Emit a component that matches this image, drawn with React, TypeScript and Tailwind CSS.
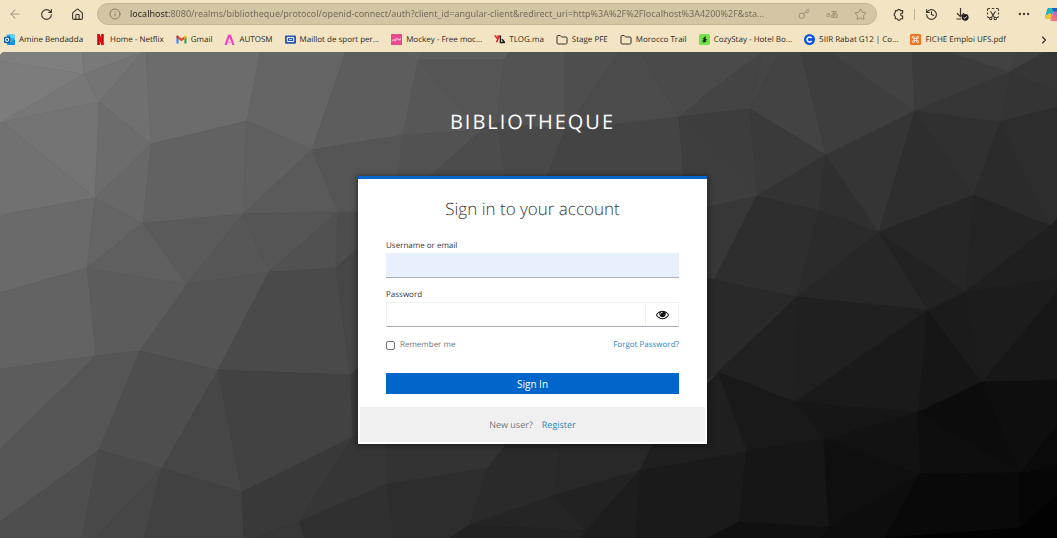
import { useState, type ReactNode } from "react";
import {
  ArrowLeft,
  ChevronRight,
  Ellipsis,
  Folder,
  History,
  House,
  Info,
  Key,
  RotateCw,
  Star,
} from "lucide-react";

const facets: [string, string][] = [
  ["#7f7f7f", "0,52 82,52 84,74 0,61"],
  ["#797979", "82,52 143,52 84,74"],
  ["#7c7c7c", "0,61 84,74 2,122 0,124"],
  ["#777777", "84,74 99,102 2,122"],
  ["#747474", "84,74 143,52 99,102"],
  ["#707070", "143,52 146,52 151,144 99,102"],
  ["#6c6c6c", "146,52 260,52 247,121 151,144"],
  ["#646464", "260,52 346,52 312,150 247,121"],
  ["#5d5d5d", "346,52 404,52 418,60 403,135 312,150"],
  ["#5f5f5f", "404,52 424,52 418,60"],
  ["#737373", "2,122 99,102 95,198"],
  ["#717171", "0,122 2,122 95,198 6,214 0,218"],
  ["#6c6c6c", "99,102 151,144 95,198"],
  ["#686868", "95,198 151,144 143,223"],
  ["#626262", "151,144 247,121 243,214 143,223"],
  ["#606060", "247,121 312,150 243,214"],
  ["#5a5a5a", "312,150 338,212 243,214"],
  ["#555555", "312,150 403,135 397,212 338,212"],
  ["#6a6a6a", "6,214 95,198 87,268 0,293 0,218"],
  ["#646464", "95,198 143,223 87,268"],
  ["#5f5f5f", "143,223 187,284 87,268"],
  ["#5a5a5a", "143,223 243,214 187,284"],
  ["#575757", "243,214 269,272 187,284"],
  ["#555555", "243,214 338,212 269,272"],
  ["#515151", "338,212 336,268 269,272"],
  ["#4d4d4d", "338,212 400,212 400,210 336,268"],
  ["#636363", "0,293 87,268 96,356 0,369"],
  ["#5c5c5c", "87,268 187,284 140,351 96,356"],
  ["#545454", "187,284 269,272 218,370 140,351"],
  ["#4a4a4a", "269,272 336,268 350,375 218,370"],
  ["#464646", "336,268 400,210 400,330 350,375"],
  ["#5c5c5c", "0,369 96,356 0,449"],
  ["#555555", "96,356 140,351 99,450 0,522 0,449"],
  ["#4e4e4e", "140,351 218,370 162,468 99,450"],
  ["#464646", "218,370 242,492 162,468"],
  ["#424242", "218,370 350,375 353,437 242,492"],
  ["#3a3a3a", "350,375 400,330 400,437 353,437"],
  ["#4e4e4e", "0,522 99,450 82,538 0,538"],
  ["#494949", "99,450 162,468 95,538 82,538"],
  ["#464646", "162,468 144,538 95,538"],
  ["#414141", "162,468 242,492 244,538 144,538"],
  ["#393939", "242,492 353,437 299,522 255,538 244,538"],
  ["#363636", "353,437 387,437 387,484 299,522"],
  ["#303030", "299,522 387,484 394,538 304,538"],
  ["#373737", "255,538 299,522 304,538"],
  ["#333333", "387,430 500,430 506,444 488,468 387,484"],
  ["#2d2d2d", "387,484 488,468 470,525 450,538 394,538"],
  ["#2a2a2a", "488,468 506,444 561,444 553,496 470,525"],
  ["#282828", "561,440 655,440 640,470 553,496"],
  ["#252525", "470,525 553,496 586,531"],
  ["#222222", "470,525 586,531 580,538 450,538"],
  ["#222222", "553,496 640,470 586,531"],
  ["#1d1d1d", "640,470 586,531 580,538 636,538"],
  ["#1a1a1a", "640,470 747,451 739,522 707,538 636,538"],
  ["#1f1f1f", "655,440 718,372 747,451 640,470"],
  ["#5c5c5c", "424,52 510,52 504,60 418,60"],
  ["#555555", "418,60 504,60 497,123 478,130"],
  ["#575757", "418,60 478,130 403,135"],
  ["#525252", "403,135 482,130 428,178 397,178"],
  ["#4c4c4c", "482,130 497,123 506,178 428,178"],
  ["#535353", "510,52 565,52 565,130 497,123 504,60"],
  ["#4e4e4e", "565,52 620,52 565,130"],
  ["#494949", "497,123 565,130 546,178 506,178"],
  ["#4b4b4b", "620,52 640,52 679,117 565,130"],
  ["#444444", "565,130 679,117 684,178 546,178"],
  ["#4a4a4a", "640,52 763,52 679,117"],
  ["#444444", "679,117 710,91 763,52 750,109"],
  ["#3d3d3d", "679,117 750,109 757,196 684,180"],
  ["#454545", "763,52 780,52 750,109"],
  ["#434343", "780,52 801,52 826,155 750,109"],
  ["#3e3e3e", "801,52 830,52 915,111 826,155"],
  ["#424242", "830,52 912,52 915,111"],
  ["#3b3b3b", "912,52 950,52 1010,72 915,111"],
  ["#414141", "950,52 1020,52 1010,72"],
  ["#404040", "1020,52 1045,52 1010,72"],
  ["#363636", "1045,52 1057,52 1057,92 1010,72"],
  ["#343434", "1010,72 1057,92 1057,107 1000,122"],
  ["#363636", "915,111 1010,72 1000,122"],
  ["#3a3a3a", "750,109 826,155 757,196"],
  ["#3e3e3e", "680,118 757,196 700,209 684,180"],
  ["#333333", "826,155 819,211 757,196"],
  ["#2f2f2f", "826,155 879,232 819,211"],
  ["#353535", "826,155 915,111 879,232"],
  ["#2e2e2e", "915,111 974,195 879,232"],
  ["#303030", "915,111 1000,122 974,195"],
  ["#2b2b2b", "1000,122 1050,226 974,195"],
  ["#2d2d2d", "1000,122 1057,107 1057,219 1050,226"],
  ["#373737", "700,209 757,196 714,280 700,285"],
  ["#2e2e2e", "757,196 819,211 797,297 714,280"],
  ["#2b2b2b", "819,211 879,232 797,297"],
  ["#272727", "879,232 928,310 797,297"],
  ["#222222", "879,232 966,292 928,310"],
  ["#262626", "879,232 974,195 966,292"],
  ["#242424", "974,195 1050,226 966,292"],
  ["#1f1f1f", "1050,226 1057,219 1057,279 966,292"],
  ["#292929", "700,275 714,280 797,297 718,372 700,385"],
  ["#212121", "797,297 795,402 718,372"],
  ["#202020", "797,297 928,310 795,402"],
  ["#1a1a1a", "928,310 918,412 795,402"],
  ["#161616", "928,310 982,382 918,412"],
  ["#1b1b1b", "928,310 966,292 982,382"],
  ["#1c1c1c", "966,292 1057,279 1057,292 982,382"],
  ["#171717", "1057,292 1057,380 982,382"],
  ["#191919", "718,372 795,402 747,451"],
  ["#191919", "795,402 824,439 747,451"],
  ["#161616", "795,402 918,412 824,439"],
  ["#121212", "824,439 918,412 920,474"],
  ["#0e0e0e", "918,412 1020,473 920,474"],
  ["#0c0c0c", "918,412 982,382 1020,473"],
  ["#0e0e0e", "982,382 1057,380 1057,425 1020,473"],
  ["#0a0a0a", "1057,425 1057,467 1020,473"],
  ["#161616", "747,451 824,439 829,527 739,522"],
  ["#101010", "739,522 829,527 820,538 707,538"],
  ["#0f0f0f", "824,439 920,474 829,527"],
  ["#0d0d0d", "829,527 920,474 885,538 820,538"],
  ["#090909", "920,474 1020,473 1020,528 885,538"],
  ["#060606", "1020,473 1057,467 1057,495 1020,528"],
  ["#020202", "1020,528 1057,495 1057,538 885,538"],
];

function Backdrop() {
  return (
    <svg
      aria-hidden="true"
      viewBox="0 52 1057 486"
      preserveAspectRatio="xMidYMid slice"
      className="absolute inset-0 h-full w-full"
    >
      {facets.map(([fill, points]) => (
        <polygon key={points} points={points} fill={fill} stroke={fill} strokeWidth="0.6" />
      ))}
    </svg>
  );
}

const icon = "size-[11px] shrink-0";

function OutlookIcon() {
  return (
    <svg viewBox="0 0 12 12" className={icon}>
      <rect x="3" y="0.5" width="8.5" height="7" rx="0.8" fill="#28a8ea" />
      <rect x="7" y="0.5" width="4.5" height="4" fill="#50d9ff" />
      <path d="M3 6l4.5 2.5L12 6v5a1 1 0 0 1-1 1H4a1 1 0 0 1-1-1z" fill="#1490df" />
      <rect x="0" y="3" width="6.8" height="6.8" rx="0.8" fill="#0f5fb4" />
      <circle cx="3.4" cy="6.4" r="1.7" fill="none" stroke="#fff" strokeWidth="1.1" />
    </svg>
  );
}

function NetflixIcon() {
  return (
    <svg viewBox="0 0 12 12" className={icon}>
      <path d="M2.5 0h2.7v12l-2.7.2zM6.8 0h2.7v12.2L6.8 12z" fill="#b1060f" />
      <path d="M2.5 0h2.7l4.3 12.2L6.8 12z" fill="#e50914" />
    </svg>
  );
}

function GmailIcon() {
  return (
    <svg viewBox="0 0 12 12" className={icon}>
      <path d="M0.5 3v7.3h2.4V5z" fill="#4285f4" />
      <path d="M11.5 3v7.3H9.1V5z" fill="#34a853" />
      <path d="M9.1 2.6v3l2.4-1.8V2.7c0-1.2-1.3-1.5-2-.9z" fill="#fbbc04" />
      <path d="M2.9 5.6v-3L6 5l3.1-2.4v3L6 8z" fill="#ea4335" />
      <path d="M0.5 2.7v1.1l2.4 1.8v-3l-.4-.8c-.8-.6-2-.2-2 .9z" fill="#c5221f" />
    </svg>
  );
}

function AutosmIcon() {
  return (
    <svg viewBox="0 0 12 12" className={icon}>
      <path d="M0.5 12L4.4 1.2Q6 0 7.6 1.2L11.5 12H9L6 3.4 3 12z" fill="#f03fc0" />
      <path d="M4.3 8.2h3.4l.6 1.6H3.7z" fill="#f79be0" />
    </svg>
  );
}

function MaillotIcon() {
  return (
    <svg viewBox="0 0 12 12" className={icon}>
      <rect x="0" y="1.5" width="12" height="9" rx="1" fill="#2857b4" />
      <rect x="2.5" y="3.7" width="7" height="4.6" rx="1" fill="none" stroke="#fff" strokeWidth="1.1" />
      <path d="M4.5 6h3" stroke="#fff" strokeWidth="0.9" />
    </svg>
  );
}

function MockeyIcon() {
  return (
    <svg viewBox="0 0 12 12" className={icon}>
      <rect width="12" height="12" rx="0.6" fill="#e64b92" />
      <path d="M2 8V6.4h2.3v1.2h1V5.2h2.5v1.2H10V4.5" fill="none" stroke="#fbd3e6" strokeWidth="1" />
    </svg>
  );
}

function TlogIcon() {
  return (
    <svg viewBox="0 0 12 12" className={icon}>
      <path d="M0.8 1.5L3.6 5M5.8 2L2.8 9" stroke="#d92323" strokeWidth="1.7" fill="none" />
      <path d="M3 2.3h4" stroke="#d92323" strokeWidth="1.2" />
      <path d="M7 1.5v7.8h5M8.8 5.5l2.6 3.5" stroke="#1c1917" strokeWidth="1.5" fill="none" />
    </svg>
  );
}

function FolderIcon() {
  return <Folder className="size-[12px] shrink-0 text-[#35302a]" strokeWidth={2} />;
}

function CozyIcon() {
  return (
    <svg viewBox="0 0 12 12" className={icon}>
      <rect width="12" height="12" rx="2" fill="#74e34b" />
      <path d="M7.3 1.8L3.6 5.6h2L3 8.2h2.2L4.6 10l4.4-2.6H7l2-2H7.2z" fill="#14321a" />
    </svg>
  );
}

function CourseIcon() {
  return (
    <svg viewBox="0 0 12 12" className={icon}>
      <circle cx="6" cy="6" r="6" fill="#0c56dc" />
      <path d="M8.3 4.5a2.7 2.7 0 1 0 0 3" fill="none" stroke="#fff" strokeWidth="1.7" />
    </svg>
  );
}

function XamppIcon() {
  return (
    <svg viewBox="0 0 12 12" className={icon}>
      <rect width="12" height="12" rx="1.4" fill="#ee7420" />
      <path
        d="M4.7 4.7H3.6a1.1 1.1 0 1 1 1.1-1.1v4.8a1.1 1.1 0 1 1-1.1-1.1h4.8a1.1 1.1 0 1 1-1.1 1.1V3.6a1.1 1.1 0 1 1 1.1 1.1z"
        fill="none"
        stroke="#fff"
        strokeWidth="0.9"
      />
    </svg>
  );
}

const bookmarks: { label: string; icon: ReactNode }[] = [
  { label: "Amine Bendadda", icon: <OutlookIcon /> },
  { label: "Home - Netflix", icon: <NetflixIcon /> },
  { label: "Gmail", icon: <GmailIcon /> },
  { label: "AUTOSM", icon: <AutosmIcon /> },
  { label: "Maillot de sport per...", icon: <MaillotIcon /> },
  { label: "Mockey - Free moc...", icon: <MockeyIcon /> },
  { label: "TLOG.ma", icon: <TlogIcon /> },
  { label: "Stage PFE", icon: <FolderIcon /> },
  { label: "Morocco Trail", icon: <FolderIcon /> },
  { label: "CozyStay - Hotel Bo...", icon: <CozyIcon /> },
  { label: "5IIR Rabat G12 | Co...", icon: <CourseIcon /> },
  { label: "FICHE Emploi UFS.pdf", icon: <XamppIcon /> },
];

function ToolButton({ label, children }: { label: string; children: ReactNode }) {
  return (
    <button type="button" aria-label={label} className="flex size-4 shrink-0 items-center justify-center">
      {children}
    </button>
  );
}

function Toolbar() {
  return (
    <div className="flex h-7 items-center overflow-hidden pl-[7px] text-[#3b352b]">
      <div className="flex shrink-0 gap-[15px]">
        <ToolButton label="Back">
          <ArrowLeft className="size-[14px] text-[#a59c86]" strokeWidth={1.8} />
        </ToolButton>
        <ToolButton label="Refresh">
          <RotateCw className="size-[13px]" strokeWidth={2} />
        </ToolButton>
        <ToolButton label="Home">
          <House className="size-[13px]" strokeWidth={2} />
        </ToolButton>
      </div>
      <div className="ml-3 flex h-[22px] min-w-0 flex-1 items-center rounded-full border border-[#c3b797] bg-[#d3c6a4] pr-2 pl-[11px]">
        <Info className="size-[12px] shrink-0 text-[#7d755f]" strokeWidth={1.8} />
        <input
          type="text"
          aria-label="Address"
          defaultValue="localhost:8080/realms/bibliotheque/protocol/openid-connect/auth?client_id=angular-client&redirect_uri=http%3A%2F%2Flocalhost%3A4200%2F&sta..."
          className="ml-[9px] min-w-0 flex-1 bg-[linear-gradient(to_right,#2b2720_40px,#6f6855_40px)] bg-clip-text font-['Noto_Sans',sans-serif] text-[9px] leading-5 text-transparent outline-none"
        />
        <div className="ml-1 flex shrink-0 items-center gap-3 text-[#958b72]">
          <ToolButton label="Saved passwords">
            <Key className="size-[12px]" strokeWidth={1.8} />
          </ToolButton>
          <ToolButton label="Translate">
            <span className="text-[8px] leading-4 font-medium">aあ</span>
          </ToolButton>
          <ToolButton label="Add to favourites">
            <Star className="size-[13px]" strokeWidth={1.8} />
          </ToolButton>
        </div>
      </div>
      <div className="ml-[13px] flex shrink-0 items-center">
        <ToolButton label="Extensions">
          <svg viewBox="0 0 14 14" className="size-[13px]" fill="none" stroke="currentColor" strokeWidth="1.2" strokeLinejoin="round">
            <path d="M3.6 2.8h2.2a1.7 1.7 0 0 1 3.3 0h2.4v2.7a1.6 1.6 0 1 0 0 3v3.1H9.2a1.7 1.7 0 0 1-3.4 0H3.6V9a2 2 0 0 1 0-3.8z" />
          </svg>
        </ToolButton>
        <span className="mx-2 h-[11px] w-px bg-[#b9ae94]" />
        <div className="flex items-center gap-[15px]">
          <ToolButton label="History">
            <History className="size-[13px]" strokeWidth={2} />
          </ToolButton>
          <ToolButton label="Downloads">
            <svg viewBox="0 0 14 14" className="size-[14px]" fill="none">
              <path d="M5.5 1v8.3M2 6.2l3.5 3.4L9 6.2M1.5 12h5" stroke="currentColor" strokeWidth="1.2" />
              <circle cx="10.2" cy="10.3" r="3.4" fill="#1f1c18" />
              <path d="M8.7 10.3l1.1 1.2 2-2.2" stroke="#fff" strokeWidth="0.9" />
            </svg>
          </ToolButton>
          <ToolButton label="Screenshot">
            <svg viewBox="0 0 14 14" className="size-[14px]" fill="none" stroke="currentColor" strokeWidth="1.1">
              <path d="M1.5 4V2.8c0-.7.5-1.3 1.3-1.3H4M5.8 1.5h2.4M10 1.5h1.2c.8 0 1.3.6 1.3 1.3V4M1.5 5.6v2M12.5 5.6v2M1.5 9.2c0 .8.5 1.3 1.5 1.3M12.5 9.2c0 .8-.5 1.3-1.5 1.3" />
              <path d="M4.5 4.2l4 6.3M9.5 4.2l-4 6.3" />
              <circle cx="4.7" cy="11.5" r="1.2" />
              <circle cx="9.3" cy="11.5" r="1.2" />
            </svg>
          </ToolButton>
          <ToolButton label="More">
            <Ellipsis className="size-[14px]" strokeWidth={2} />
          </ToolButton>
        </div>
        <button type="button" aria-label="Copilot" className="ml-[13px] w-[12px] shrink-0 overflow-hidden">
          <svg viewBox="0 0 12 15" className="h-[15px] w-[12px]">
            <path d="M4 1h5L6 12H2.5C.5 12 0 10.5.6 8.5L2 3C2.4 1.6 3 1 4 1z" fill="#1a8fe6" />
            <path d="M2 4C2.4 2 3 1 4.5 1H9L7.5 6 1 8z" fill="#24b6b0" />
            <path d="M.6 8.5L5 6l2 2-1.5 4h-3C.6 12 .2 10.5.6 8.5z" fill="#f0c52e" />
            <path d="M7 1h5v4H8.5z" fill="#1560d4" />
            <path d="M8.5 4.5H12V14H5c1.2-.3 1.5-1.5 2-3z" fill="#d75bc8" />
            <path d="M6.5 11l1-3.5L12 10v4H5c.8-.4 1.2-1.5 1.5-3z" fill="#f4717e" />
          </svg>
        </button>
      </div>
    </div>
  );
}

function BookmarkBar() {
  return (
    <nav aria-label="Bookmarks" className="flex h-6 items-center justify-between pr-[7px] pb-px pl-1">
      <ul className="flex min-w-0 items-center gap-3 overflow-hidden">
        {bookmarks.map((b) => (
          <li key={b.label} className="shrink-0">
            <a href="#" className="flex items-center gap-1 text-[8px] leading-4 whitespace-nowrap text-[#2c2822]">
              {b.icon}
              {b.label}
            </a>
          </li>
        ))}
      </ul>
      <button type="button" aria-label="More bookmarks" className="shrink-0">
        <ChevronRight className="size-[12px] text-[#2c2822]" strokeWidth={2.2} />
      </button>
    </nav>
  );
}

function EyeIcon({ crossed }: { crossed: boolean }) {
  return (
    <svg viewBox="0 0 1792 1792" className="size-[13px]" fill="currentColor">
      <path d="M1664 960q-152-236-381-353 61 104 61 225 0 185-131.5 316.5t-316.5 131.5-316.5-131.5-131.5-316.5q0-121 61-225-229 117-381 353 133 205 333.5 326.5t434.5 121.5 434.5-121.5 333.5-326.5zm-720-384q0-20-14-34t-34-14q-125 0-214.5 89.5t-89.5 214.5q0 20 14 34t34 14 34-14 14-34q0-86 61-147t147-61q20 0 34-14t14-34zm848 384q0 34-20 69-140 230-376.5 368.5t-499.5 138.5-499.5-139-376.5-368q-20-35-20-69t20-69q140-229 376.5-368t499.5-139 499.5 139 376.5 368q20 35 20 69z" />
      {crossed && <path d="M350 1600L1350 250" stroke="currentColor" strokeWidth="130" />}
    </svg>
  );
}

function SignInCard() {
  const [visible, setVisible] = useState(false);
  return (
    <main className="w-full max-w-[349px] border-t-[3px] border-[#0066cc] bg-white shadow-[0_1px_6px_1px_rgba(0,0,0,0.45)]">
      <form className="px-7 pt-[18px] pb-[13px]" onSubmit={(e) => e.preventDefault()}>
        <h1 className="text-center text-[17px] leading-6 font-light text-[#363636]">Sign in to your account</h1>

        <label htmlFor="username" className="mt-[18px] block text-[8px] leading-[14px] text-[#363636]">
          Username or email
        </label>
        <input
          id="username"
          type="text"
          className="block h-[25px] w-full border-b border-[#a9adb3] bg-[#e8f0fe] px-2 text-[10px] outline-none"
        />

        <label htmlFor="password" className="mt-[10px] block text-[8px] leading-[14px] text-[#363636]">
          Password
        </label>
        <div className="flex h-[25px] border border-[#f0f0f0] border-b-[#a9adb3]">
          <input
            id="password"
            type={visible ? "text" : "password"}
            className="min-w-0 flex-1 px-2 text-[10px] outline-none"
          />
          <button
            type="button"
            aria-label={visible ? "Hide password" : "Show password"}
            onClick={() => setVisible(!visible)}
            className="flex w-[33px] items-center justify-center border-l border-[#f0f0f0] text-[#151515]"
          >
            <EyeIcon crossed={visible} />
          </button>
        </div>

        <div className="mt-[11px] flex items-center justify-between text-[8px] leading-[14px]">
          <label className="flex items-center gap-[5px] text-[#72767b]">
            <input
              type="checkbox"
              className="size-[9px] appearance-none rounded-[2px] border border-[#767676] bg-white checked:bg-[#0066cc]"
            />
            Remember me
          </label>
          <a href="#" className="text-[#1f86bd]">
            Forgot Password?
          </a>
        </div>

        <button type="submit" className="mt-[21px] block h-[21px] w-full bg-[#0066cc] text-[10px] leading-5 font-medium text-white">
          Sign In
        </button>
      </form>
      <div className="mx-[2px] mb-[2px] flex h-[35px] items-center justify-center gap-[9px] bg-[#f0f0f0] text-[9px] text-[#72767b]">
        <span>New user?</span>
        <a href="#" className="text-[#1f86bd]">
          Register
        </a>
      </div>
    </main>
  );
}

export default function App() {
  return (
    <div className="flex min-h-screen flex-col bg-[#f3e5c3] font-['Open_Sans','Noto_Sans_CJK_JP',sans-serif] [text-rendering:geometricPrecision]">
      <header>
        <Toolbar />
        <BookmarkBar />
      </header>
      <div className="relative flex flex-1 flex-col overflow-hidden rounded-tl-[5px] bg-[#3a3a3a]">
        <Backdrop />
        <div className="relative flex flex-col items-center pt-14 pr-2 pb-8 pl-4">
          <div className="text-[20px] leading-7 tracking-[2px] text-white uppercase">Bibliotheque</div>
          <div className="mt-10 flex w-full justify-center">
            <SignInCard />
          </div>
        </div>
      </div>
    </div>
  );
}
